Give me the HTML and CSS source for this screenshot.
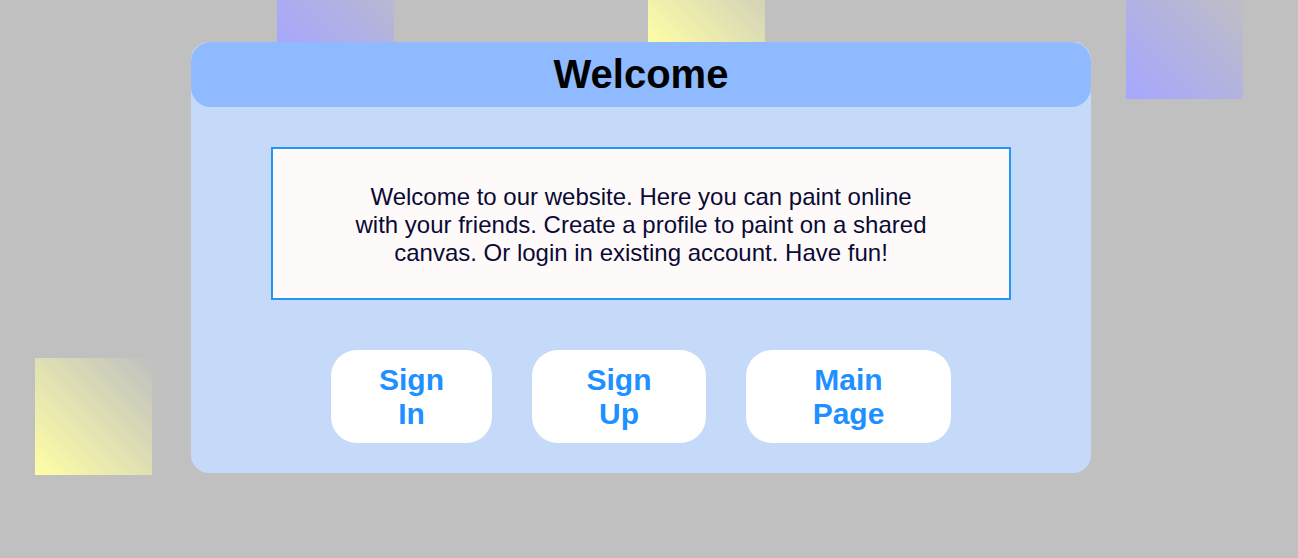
FILE: index.html
```html
<!DOCTYPE html>
<html>
<head>
<meta charset="utf-8">
<link rel="stylesheet" href="styles.css">
</head>
<body>
<div class="deco deco-blue sq1"></div>
<div class="deco deco-yellow sq2"></div>
<div class="deco deco-blue sq3"></div>
<div class="deco deco-yellow sq4"></div>
<main class="card">
  <header class="card-header"><h1>Welcome</h1></header>
  <div class="info">
    <p>Welcome to our website. Here you can paint online with your friends. Create a profile to paint on a shared canvas. Or login in existing account. Have fun!</p>
  </div>
  <nav class="actions">
    <a class="btn btn-in" href="#">Sign In</a>
    <a class="btn btn-up" href="#">Sign Up</a>
    <a class="btn btn-main" href="#">Main Page</a>
  </nav>
</main>
</body>
</html>
```
FILE: styles.css
```css
html, body {
  margin: 0;
  padding: 0;
}
body {
  background: #c0c0c0;
  font-family: "Liberation Sans", Arial, sans-serif;
  width: 1298px;
  height: 558px;
  position: relative;
  overflow: hidden;
}
.deco {
  position: absolute;
  width: 117px;
  height: 117px;
  z-index: 0;
}
.deco-blue {
  background: linear-gradient(to top right, #a6a6ff, #c0c0c0);
}
.deco-yellow {
  background: linear-gradient(to top right, #ffffa6, #c0c0c0);
}
.sq1 { left: 277px; top: -70px; }
.sq2 { left: 648px; top: -70px; }
.sq3 { left: 1126px; top: -18px; }
.sq4 { left: 35px; top: 358px; }

.card {
  position: relative;
  z-index: 1;
  width: 900px;
  margin: 42px 0 0 191px;
  height: 431px;
  background: #c5daf9;
  border-radius: 18px;
  display: flex;
  flex-direction: column;
  align-items: center;
}
.card-header {
  align-self: stretch;
  height: 65px;
  background: #8fbaff;
  border-radius: 20px;
  display: flex;
  align-items: center;
  justify-content: center;
}
.card-header h1 {
  margin: 0;
  font-size: 40px;
  font-weight: bold;
  color: #000;
}
.info {
  margin-top: 40px;
  width: 736px;
  height: 149px;
  box-sizing: content-box;
  border: 2px solid #2196f3;
  background: #fffafa;
  display: flex;
  align-items: center;
  justify-content: center;
  padding-top: 0;
}
.info p {
  margin: 3px 0 0;
  width: 580px;
  text-align: center;
  font-size: 24px;
  line-height: 28px;
  color: #0a0a35;
}
.actions {
  margin-top: 50px;
  display: flex;
  gap: 40px;
}
.btn {
  height: 93px;
  background: #fff;
  border-radius: 26px;
  display: flex;
  align-items: center;
  justify-content: center;
  text-align: center;
  text-decoration: none;
  color: #1e90ff;
  font-weight: bold;
  font-size: 30px;
  line-height: 34px;
  box-sizing: border-box;
  padding: 1px 40px 0;
}
.btn-in { width: 161px; }
.btn-up { width: 174px; }
.btn-main { width: 205px; }
```
